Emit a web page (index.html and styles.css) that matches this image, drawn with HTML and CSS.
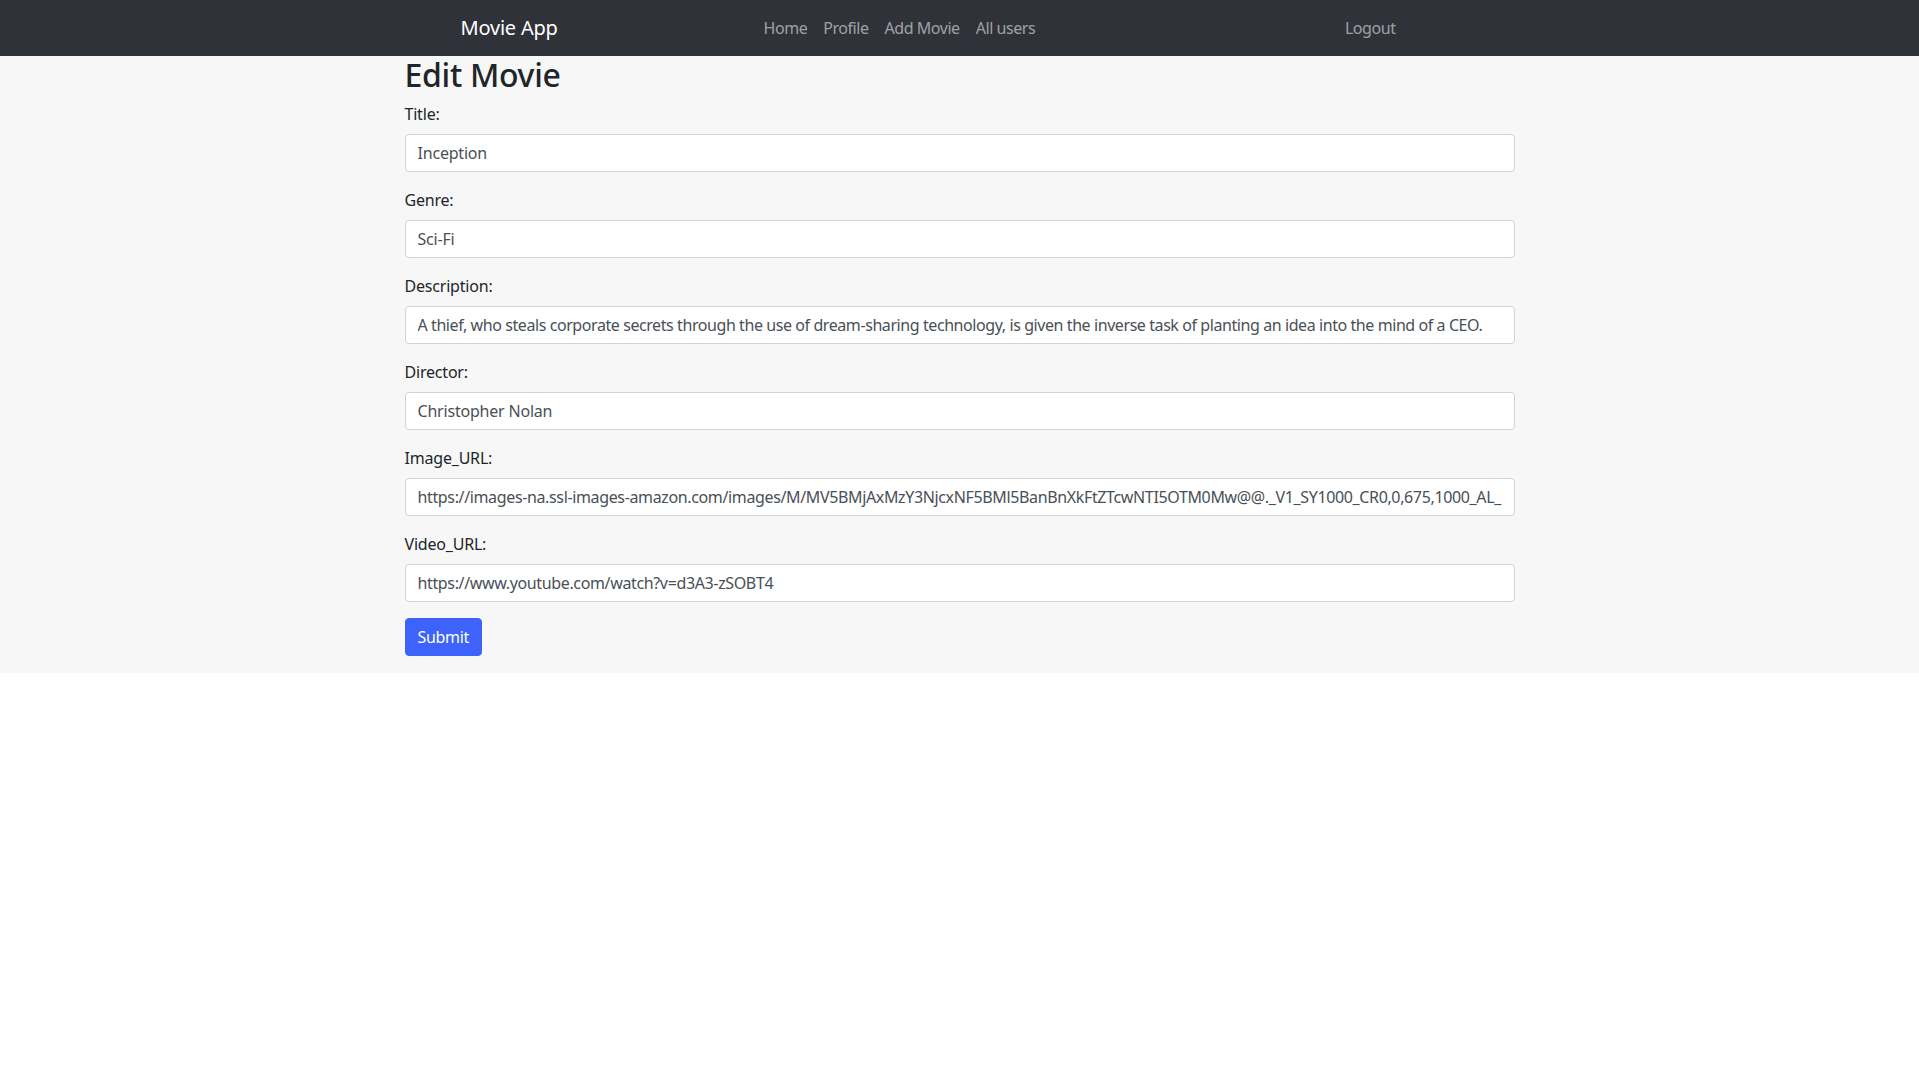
FILE: index.html
```html
<!DOCTYPE html>
<html lang="en">
<head>
<meta charset="utf-8">
<title>Movie App - Edit Movie</title>
<link rel="stylesheet" href="styles.css">
</head>
<body>
<nav class="navbar">
  <div class="nav-inner">
    <a class="brand" href="#">Movie App</a>
    <ul class="nav-links">
      <li><a href="#">Home</a></li>
      <li><a href="#">Profile</a></li>
      <li><a href="#">Add Movie</a></li>
      <li><a href="#">All users</a></li>
    </ul>
    <a class="nav-logout" href="#">Logout</a>
  </div>
</nav>
<main class="page">
  <div class="container">
    <h1 class="title">Edit Movie</h1>
    <form class="form">
      <div class="form-group">
        <label for="title">Title:</label>
        <input id="title" class="form-control" type="text" value="Inception">
      </div>
      <div class="form-group">
        <label for="genre">Genre:</label>
        <input id="genre" class="form-control" type="text" value="Sci-Fi">
      </div>
      <div class="form-group">
        <label for="description">Description:</label>
        <input id="description" class="form-control form-control-long" type="text" value="A thief, who steals corporate secrets through the use of dream-sharing technology, is given the inverse task of planting an idea into the mind of a CEO.">
      </div>
      <div class="form-group">
        <label for="director">Director:</label>
        <input id="director" class="form-control" type="text" value="Christopher Nolan">
      </div>
      <div class="form-group">
        <label for="image">Image_URL:</label>
        <input id="image" class="form-control form-control-url" type="text" value="https://images-na.ssl-images-amazon.com/images/M/MV5BMjAxMzY3NjcxNF5BMl5BanBnXkFtZTcwNTI5OTM0Mw@@._V1_SY1000_CR0,0,675,1000_AL_.jpg">
      </div>
      <div class="form-group">
        <label for="video">Video_URL:</label>
        <input id="video" class="form-control form-control-url" type="text" value="https://www.youtube.com/watch?v=d3A3-zSOBT4">
      </div>
      <button class="btn-primary" type="submit">Submit</button>
    </form>
  </div>
</main>
</body>
</html>
```

FILE: styles.css
```css
* {
  box-sizing: border-box;
}

body {
  margin: 0;
  font-family: "Noto Sans", "Open Sans", sans-serif;
  font-size: 16px;
  line-height: 1.5;
  color: #212529;
  background: #ffffff;
  letter-spacing: -0.2px;
}

.navbar {
  background: #30323a;
  height: 56px;
}

.nav-inner {
  width: 1110px;
  margin: 0 auto;
  height: 56px;
  display: flex;
  align-items: center;
  padding: 0 111px 0 56px;
}

.brand {
  width: 295px;
  font-size: 20px;
  line-height: 30px;
  color: #ffffff;
  text-decoration: none;
}

.nav-links {
  display: flex;
  list-style: none;
  margin: 0;
  padding: 0;
}

.nav-links a,
.nav-logout {
  display: block;
  padding: 8px;
  color: rgba(255, 255, 255, 0.55);
  text-decoration: none;
  font-size: 16px;
  line-height: 24px;
  letter-spacing: -0.45px;
}

.nav-logout {
  margin-left: auto;
}

.page {
  background: #f7f7f7;
  padding-bottom: 17px;
}

.container {
  width: 1110px;
  margin: 0 auto;
}

.title {
  margin: 0 0 8px;
  font-size: 32px;
  line-height: 38px;
  font-weight: 500;
  color: #212529;
  letter-spacing: -0.3px;
}

.form {
  margin: 0;
}

.form-group {
  margin-bottom: 16px;
}

.form-group label {
  display: block;
  margin-bottom: 8px;
  line-height: 24px;
}

.form-control {
  display: block;
  width: 100%;
  height: 38px;
  padding: 6px 12px;
  font-family: inherit;
  font-size: 16px;
  line-height: 24px;
  letter-spacing: -0.2px;
  color: #495057;
  background: #ffffff;
  border: 1px solid #ced4da;
  border-radius: 4px;
}

.form-control-long {
  letter-spacing: -0.42px;
}

.form-control-url {
  letter-spacing: -0.36px;
}

.btn-primary {
  display: inline-block;
  height: 38px;
  padding: 6px 12px;
  font-family: inherit;
  font-size: 16px;
  line-height: 24px;
  letter-spacing: -0.3px;
  color: #ffffff;
  background: #3d63fb;
  border: 1px solid #3d63fb;
  border-radius: 4px;
  cursor: pointer;
}
```
